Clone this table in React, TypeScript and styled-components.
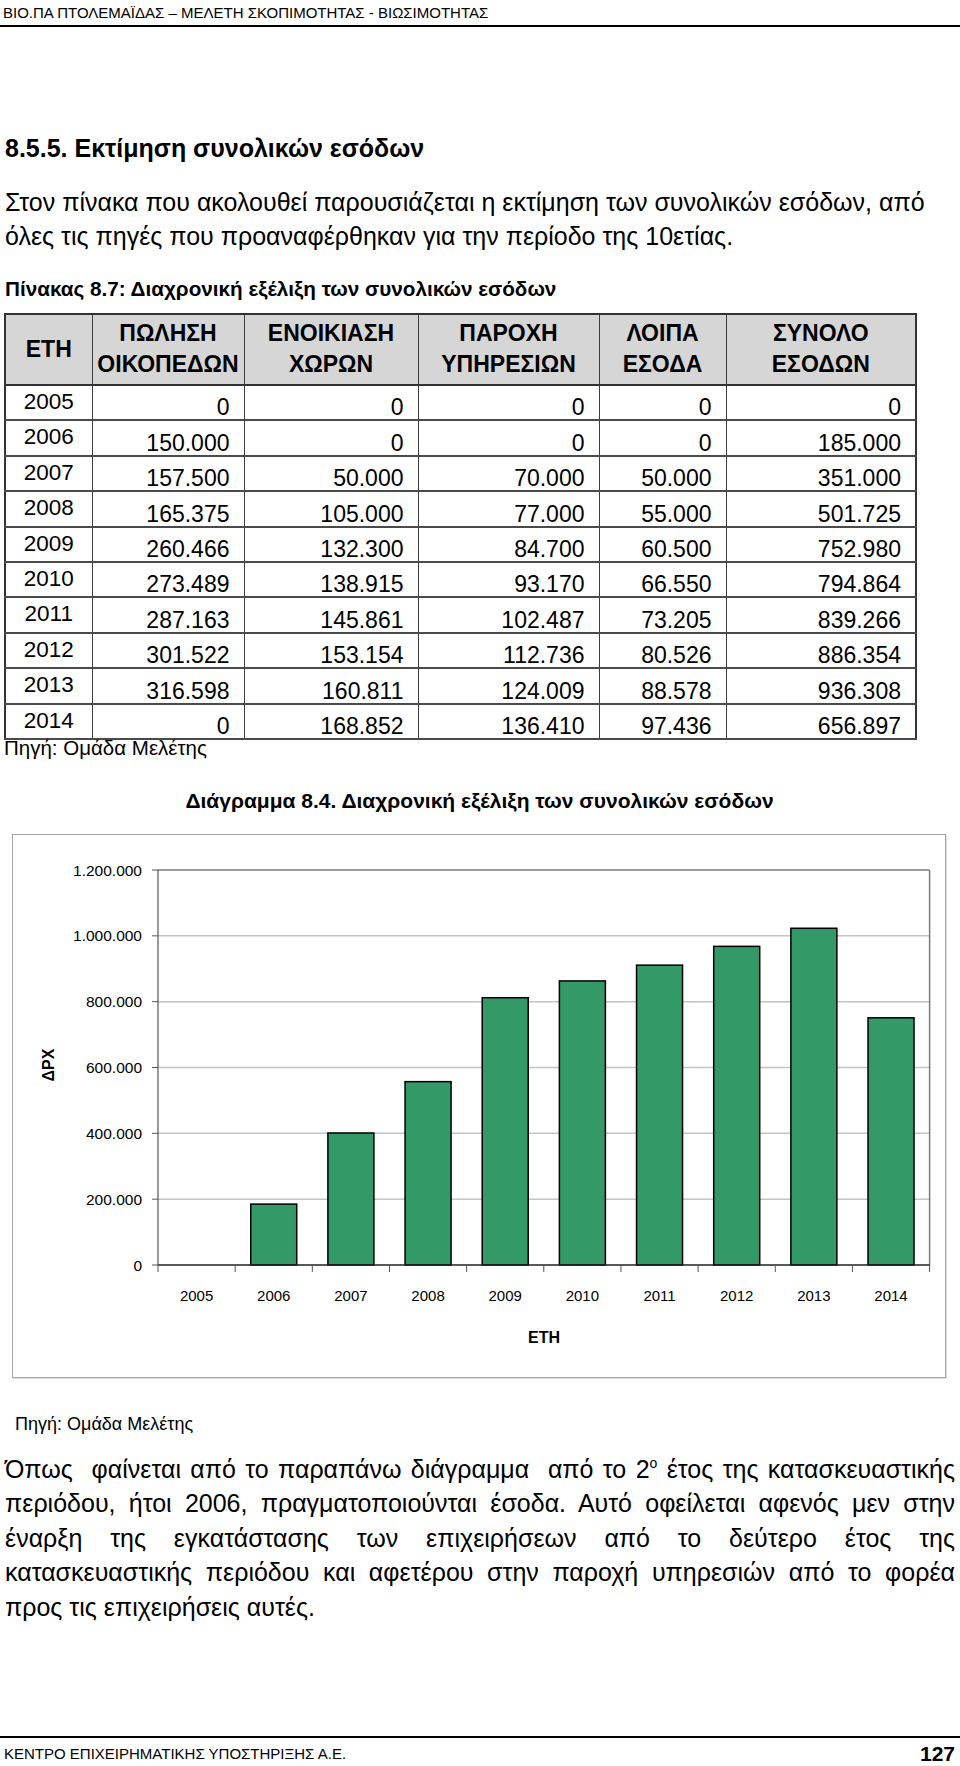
import React from "react";
import styled, { createGlobalStyle } from "styled-components";

const Global = createGlobalStyle`
  html, body { margin: 0; padding: 0; background: #ffffff; }
  body { font-family: "Liberation Sans", Arial, sans-serif; color: #000; }
`;

const Page = styled.div`
  width: 960px;
  height: 1766px;
  display: flex;
  flex-direction: column;
  box-sizing: border-box;
  overflow: hidden;
`;

const RunningHead = styled.header`
  padding: 3px 0 2px 3px;
  border-bottom: 2px solid #000;
  font-size: 15px;
  line-height: 20px;
  white-space: nowrap;
`;

const Content = styled.main`
  padding: 0 5px 0 4px;
  display: flex;
  flex-direction: column;
`;

const Heading = styled.h2`
  margin: 106px 0 0 1px;
  font-size: 25px;
  line-height: 30px;
  font-weight: bold;
  white-space: nowrap;
`;

const Intro = styled.p`
  margin: 22px 0 0 1px;
  font-size: 25px;
  line-height: 34px;
`;

const TextLine = styled.span<{ $justify?: boolean }>`
  display: block;
  white-space: nowrap;
  text-align: ${(p) => (p.$justify ? "justify" : "left")};
  text-align-last: ${(p) => (p.$justify ? "justify" : "left")};
`;

const TableCaption = styled.div`
  margin: 24px 0 0 1px;
  font-size: 20.7px;
  line-height: 24px;
  font-weight: bold;
  white-space: nowrap;
`;

const DataTable = styled.table`
  margin-top: 12px;
  width: 911px;
  border-collapse: collapse;
  table-layout: fixed;
  border: 2px solid #333;
  font-size: 23px;
`;

const HeadCell = styled.th`
  background: #d6d6d6;
  font-weight: bold;
  font-size: 23px;
  line-height: 31px;
  text-align: center;
  vertical-align: middle;
  padding: 3px 0 4px 0;
  border: 1px solid #3c3c3c;
  border-bottom: 2px solid #333;
  height: 62px;
  white-space: nowrap;
`;

const BodyRow = styled.tr`
  height: 35.4px;
`;

const YearCell = styled.td`
  text-align: center;
  vertical-align: top;
  font-size: 22.5px;
  line-height: 22px;
  padding: 5px 0 0 0;
  border-left: 2px solid #333;
  border-right: 1px solid #3c3c3c;
  border-bottom: 2px solid #4a4a4a;
`;

const NumCell = styled.td`
  text-align: right;
  vertical-align: bottom;
  line-height: 22px;
  padding: 0 14px 1px 0;
  border-right: 1px solid #3c3c3c;
  border-bottom: 2px solid #4a4a4a;
  white-space: nowrap;
`;

const Source = styled.div<{ $size: number; $top: number; $left: number; $lh: number }>`
  margin: ${(p) => p.$top}px 0 0 ${(p) => p.$left}px;
  font-size: ${(p) => p.$size}px;
  line-height: ${(p) => p.$lh}px;
  white-space: nowrap;
`;

const ChartCaption = styled.div`
  margin: 33px 0 0 0;
  text-align: center;
  font-size: 21px;
  line-height: 24px;
  font-weight: bold;
  white-space: nowrap;
`;

const ChartFrame = styled.figure`
  margin: 21px 0 0 8px;
  width: 934px;
  height: 544px;
  box-sizing: border-box;
  border: 1px solid #a6a6a6;
  box-shadow: 1px 1px 1px rgba(0, 0, 0, 0.12);
  background: #fff;
`;

const Body = styled.p`
  margin: 17px 0 0 1px;
  font-size: 25px;
  line-height: 34.5px;
`;

const Sup = styled.sup`
  font-size: 14px;
  line-height: 0;
  vertical-align: 10px;
`;

const Footer = styled.footer`
  margin-top: auto;
  border-top: 2px solid #000;
  padding: 7px 5px 3px 4px;
  height: 18px;
  display: flex;
  justify-content: space-between;
  align-items: center;
`;

const FooterText = styled.span`
  font-size: 15px;
  line-height: 18px;
  white-space: nowrap;
`;

const PageNum = styled.span`
  font-size: 21px;
  line-height: 18px;
  font-weight: bold;
`;

const rows: [string, string, string, string, string, string][] = [
  ["2005", "0", "0", "0", "0", "0"],
  ["2006", "150.000", "0", "0", "0", "185.000"],
  ["2007", "157.500", "50.000", "70.000", "50.000", "351.000"],
  ["2008", "165.375", "105.000", "77.000", "55.000", "501.725"],
  ["2009", "260.466", "132.300", "84.700", "60.500", "752.980"],
  ["2010", "273.489", "138.915", "93.170", "66.550", "794.864"],
  ["2011", "287.163", "145.861", "102.487", "73.205", "839.266"],
  ["2012", "301.522", "153.154", "112.736", "80.526", "886.354"],
  ["2013", "316.598", "160.811", "124.009", "88.578", "936.308"],
  ["2014", "0", "168.852", "136.410", "97.436", "656.897"],
];

const colWidths = [87, 152, 174, 181, 127, 190];

const heads: string[][] = [
  ["ΕΤΗ"],
  ["ΠΩΛΗΣΗ", "ΟΙΚΟΠΕΔΩΝ"],
  ["ΕΝΟΙΚΙΑΣΗ", "ΧΩΡΩΝ"],
  ["ΠΑΡΟΧΗ", "ΥΠΗΡΕΣΙΩΝ"],
  ["ΛΟΙΠΑ", "ΕΣΟΔΑ"],
  ["ΣΥΝΟΛΟ", "ΕΣΟΔΩΝ"],
];

const chartValues = [0, 185000, 401000, 557000, 812000, 863000, 911000, 968000, 1023000, 751000];
const years = ["2005", "2006", "2007", "2008", "2009", "2010", "2011", "2012", "2013", "2014"];
const yLabels = ["1.200.000", "1.000.000", "800.000", "600.000", "400.000", "200.000", "0"];

const PL = 145;
const PR = 916.6;
const PT = 35;
const PB = 430;
const PH = PB - PT;
const CW = (PR - PL) / 10;
const MAXV = 1200000;
const FONT = "Liberation Sans, Arial, sans-serif";

const BarChart: React.FC = () => (
  <svg width="932" height="542" viewBox="0 0 932 542" style={{ display: "block" }}>
    {yLabels.map((lab, i) => {
      const y = PT + (PH / 6) * i;
      return (
        <g key={lab}>
          {i > 0 && i < 6 && <line x1={PL} x2={PR} y1={y} y2={y} stroke="#c4c4c4" strokeWidth="1.5" />}
          <line x1={PL - 6} x2={PL} y1={y} y2={y} stroke="#555" strokeWidth="1" />
          <text x={129} y={y + 5.6} textAnchor="end" fontFamily={FONT} fontSize="15.5" fill="#000">
            {lab}
          </text>
        </g>
      );
    })}
    <line x1={PL} x2={PR} y1={PT} y2={PT} stroke="#7a7a7a" strokeWidth="1.5" />
    <line x1={PR} x2={PR} y1={PT} y2={PB} stroke="#7a7a7a" strokeWidth="1.5" />
    {chartValues.map((v, i) => {
      if (v === 0) return null;
      const h = (v / MAXV) * PH;
      const cx = PL + CW * (i + 0.5);
      return (
        <rect
          key={years[i]}
          x={cx - 23}
          y={PB - h}
          width={46}
          height={h}
          fill="#339966"
          stroke="#000"
          strokeWidth="1.5"
        />
      );
    })}
    <line x1={PL} x2={PL} y1={PT} y2={PB} stroke="#555" strokeWidth="1.2" />
    <line x1={PL} x2={PR} y1={PB} y2={PB} stroke="#222" strokeWidth="1.5" />
    {Array.from({ length: 11 }).map((_, i) => (
      <line key={i} x1={PL + CW * i} x2={PL + CW * i} y1={PB} y2={PB + 7} stroke="#555" strokeWidth="1" />
    ))}
    {years.map((yr, i) => (
      <text key={yr} x={PL + CW * (i + 0.5)} y={466} textAnchor="middle" fontFamily={FONT} fontSize="15" fill="#000">
        {yr}
      </text>
    ))}
    <text x={531} y={508} textAnchor="middle" fontFamily={FONT} fontSize="16" fontWeight="bold" fill="#000">
      ΕΤΗ
    </text>
    <text
      x={41}
      y={230}
      transform="rotate(-90 41 230)"
      textAnchor="middle"
      fontFamily={FONT}
      fontSize="16"
      fontWeight="bold"
      fill="#000"
    >
      ΔΡΧ
    </text>
  </svg>
);

const bodyLines: React.ReactNode[] = [
  <>
    Όπως&nbsp; φαίνεται από το παραπάνω διάγραμμα&nbsp; από το 2<Sup>ο</Sup> έτος της κατασκευαστικής
  </>,
  "περιόδου, ήτοι 2006, πραγματοποιούνται έσοδα. Αυτό οφείλεται αφενός μεν στην",
  "έναρξη της εγκατάστασης των επιχειρήσεων από το δεύτερο έτος της",
  "κατασκευαστικής περιόδου και αφετέρου στην παροχή υπηρεσιών από το φορέα",
  "προς τις επιχειρήσεις αυτές.",
];

export default function App() {
  return (
    <>
      <Global />
      <Page>
        <RunningHead>ΒΙΟ.ΠΑ ΠΤΟΛΕΜΑΪΔΑΣ – ΜΕΛΕΤΗ ΣΚΟΠΙΜΟΤΗΤΑΣ - ΒΙΩΣΙΜΟΤΗΤΑΣ</RunningHead>
        <Content>
          <Heading>8.5.5. Εκτίμηση συνολικών εσόδων</Heading>
          <Intro>
            <TextLine>Στον πίνακα που ακολουθεί παρουσιάζεται η εκτίμηση των συνολικών εσόδων, από</TextLine>
            <TextLine>όλες τις πηγές που προαναφέρθηκαν για την περίοδο της 10ετίας.</TextLine>
          </Intro>
          <TableCaption>Πίνακας 8.7: Διαχρονική εξέλιξη των συνολικών εσόδων</TableCaption>
          <DataTable>
            <colgroup>
              {colWidths.map((w, i) => (
                <col key={i} style={{ width: w }} />
              ))}
            </colgroup>
            <thead>
              <tr>
                {heads.map((h) => (
                  <HeadCell key={h.join()}>
                    {h.map((line, j) => (
                      <React.Fragment key={line}>
                        {j > 0 && <br />}
                        {line}
                      </React.Fragment>
                    ))}
                  </HeadCell>
                ))}
              </tr>
            </thead>
            <tbody>
              {rows.map((r) => (
                <BodyRow key={r[0]}>
                  <YearCell>{r[0]}</YearCell>
                  {r.slice(1).map((v, j) => (
                    <NumCell key={j}>{v}</NumCell>
                  ))}
                </BodyRow>
              ))}
            </tbody>
          </DataTable>
          <Source $size={20.5} $top={0} $left={0} $lh={16}>
            Πηγή: Ομάδα Μελέτης
          </Source>
          <ChartCaption>Διάγραμμα 8.4. Διαχρονική εξέλιξη των συνολικών εσόδων</ChartCaption>
          <ChartFrame>
            <BarChart />
          </ChartFrame>
          <Source $size={18} $top={35} $left={11} $lh={22}>
            Πηγή: Ομάδα Μελέτης
          </Source>
          <Body>
            {bodyLines.map((ln, i) => (
              <TextLine key={i} $justify={i < bodyLines.length - 1}>
                {ln}
              </TextLine>
            ))}
          </Body>
        </Content>
        <Footer>
          <FooterText>ΚΕΝΤΡΟ ΕΠΙΧΕΙΡΗΜΑΤΙΚΗΣ ΥΠΟΣΤΗΡΙΞΗΣ Α.Ε.</FooterText>
          <PageNum>127</PageNum>
        </Footer>
      </Page>
    </>
  );
}
